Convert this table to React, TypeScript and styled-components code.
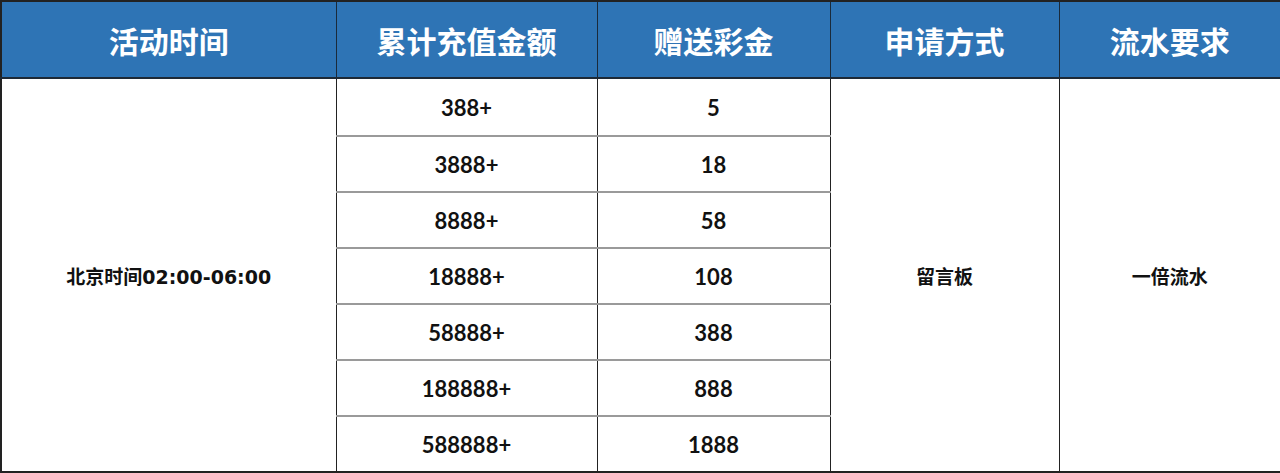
import React from 'react'
import styled, { createGlobalStyle } from 'styled-components'

const GlobalStyle = createGlobalStyle`
  html, body {
    margin: 0;
    padding: 0;
    background: #fff;
  }
`

const Table = styled.table`
  width: 1280px;
  table-layout: fixed;
  border-collapse: collapse;
  border: 2px solid #222;
  font-family: Lato, "Noto Sans CJK SC", sans-serif;
  color: #111;
`

const HeadCell = styled.th`
  height: 75px;
  padding: 0;
  background: #2e74b5;
  color: #fff;
  font-family: "Noto Sans CJK SC", sans-serif;
  font-size: 30px;
  font-weight: 700;
  text-align: center;
  border-left: 1px solid #1a2a3a;
  border-bottom: 2px solid #1e2a36;
`

const Cell = styled.td<{ $rowLine?: boolean; $first?: boolean }>`
  height: ${({ $first }) => ($first ? '56px' : '54px')};
  padding: 0;
  text-align: center;
  vertical-align: middle;
  font-size: 22px;
  font-weight: 700;
  border-left: 1px solid #222;
  border-top: ${({ $rowLine }) => ($rowLine ? '2px solid #9a9a9a' : '2px solid #b5b5b5')};
`

const MergedText = styled.span`
  font-family: "DejaVu Sans", "Noto Sans CJK SC", sans-serif;
  font-size: 19px;
  font-weight: 700;
`

const COLS = [335, 261, 233, 229, 222]
const HEADERS = ['活动时间', '累计充值金额', '赠送彩金', '申请方式', '流水要求']
const TIERS = [
  ['388+', '5'],
  ['3888+', '18'],
  ['8888+', '58'],
  ['18888+', '108'],
  ['58888+', '388'],
  ['188888+', '888'],
  ['588888+', '1888'],
]

export default function App() {
  return (
    <>
      <GlobalStyle />
      <Table>
        <colgroup>
          {COLS.map((w, i) => (
            <col key={i} style={{ width: w }} />
          ))}
        </colgroup>
        <thead>
          <tr>
            {HEADERS.map(h => (
              <HeadCell key={h}>{h}</HeadCell>
            ))}
          </tr>
        </thead>
        <tbody>
          {TIERS.map(([amount, bonus], index) => (
            <tr key={amount}>
              {index === 0 && (
                <Cell rowSpan={TIERS.length}>
                  <MergedText>北京时间02:00-06:00</MergedText>
                </Cell>
              )}
              <Cell $rowLine={index > 0} $first={index === 0}>{amount}</Cell>
              <Cell $rowLine={index > 0} $first={index === 0}>{bonus}</Cell>
              {index === 0 && (
                <Cell rowSpan={TIERS.length}>
                  <MergedText>留言板</MergedText>
                </Cell>
              )}
              {index === 0 && (
                <Cell rowSpan={TIERS.length}>
                  <MergedText>一倍流水</MergedText>
                </Cell>
              )}
            </tr>
          ))}
        </tbody>
      </Table>
    </>
  )
}
